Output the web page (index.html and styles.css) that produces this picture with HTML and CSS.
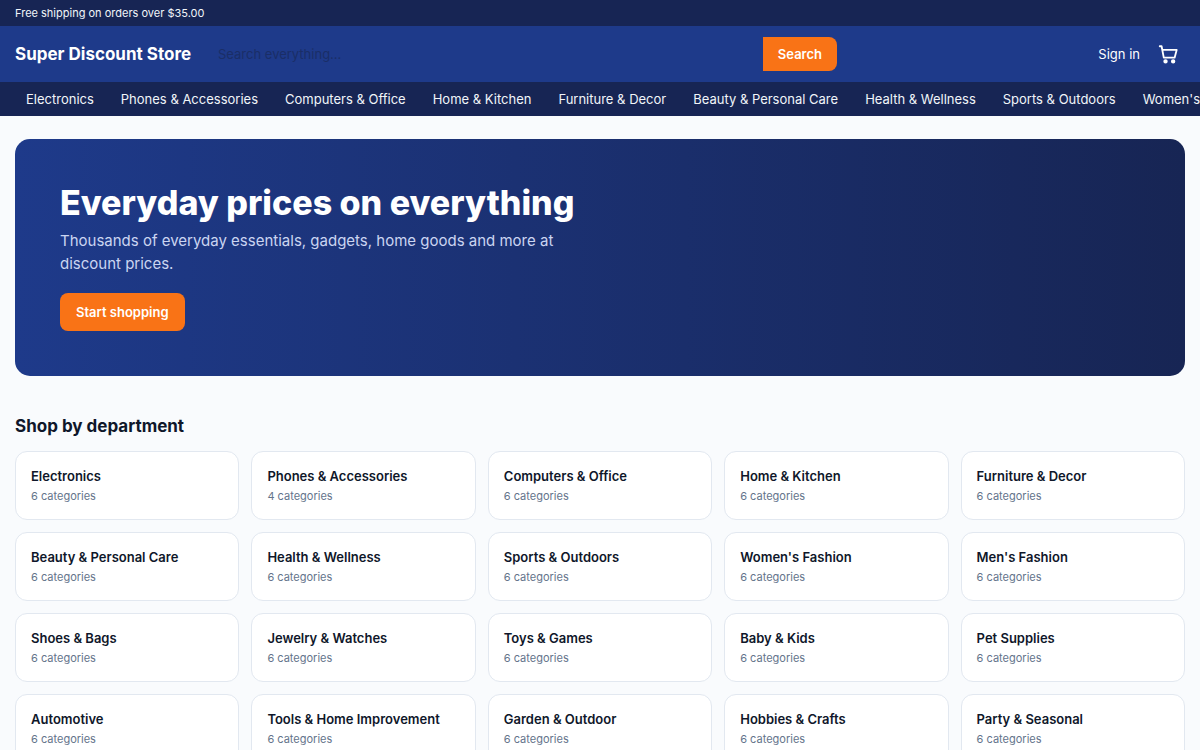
FILE: index.html
```html
<!DOCTYPE html>
<html lang="en">
<head>
<meta charset="utf-8">
<meta name="viewport" content="width=device-width, initial-scale=1">
<title>Super Discount Store</title>
<link rel="stylesheet" href="styles.css">
</head>
<body>
<div class="promo">Free shipping on orders over $35.00</div>
<header class="header">
  <a class="brand" href="#">Super Discount Store</a>
  <form class="search" role="search">
    <input class="search-input" type="search" placeholder="Search everything..." aria-label="Search everything">
    <button class="search-button" type="submit">Search</button>
  </form>
  <div class="account">
    <a class="sign-in" href="#">Sign in</a>
    <a class="cart" href="#" aria-label="Cart">
      <svg class="cart-icon" viewBox="0 0 24 24" fill="none" stroke="currentColor" stroke-width="2" stroke-linecap="round" stroke-linejoin="round" aria-hidden="true"><path d="M3 3.500h2l2.400 12.500h11.800L21.500 7.500H5.800"/><circle cx="9.300" cy="20" r="1.400" fill="currentColor"/><circle cx="17.600" cy="20" r="1.400" fill="currentColor"/></svg>
    </a>
  </div>
</header>
<nav class="departments" aria-label="Departments">
  <a href="#">Electronics</a>
  <a href="#">Phones &amp; Accessories</a>
  <a href="#">Computers &amp; Office</a>
  <a href="#">Home &amp; Kitchen</a>
  <a href="#">Furniture &amp; Decor</a>
  <a href="#">Beauty &amp; Personal Care</a>
  <a href="#">Health &amp; Wellness</a>
  <a href="#">Sports &amp; Outdoors</a>
  <a href="#">Women's Fashion</a>
</nav>
<main class="main">
  <section class="hero">
    <div class="hero-copy">
      <h1>Everyday prices on everything</h1>
      <p>Thousands of everyday essentials, gadgets, home goods and more at discount prices.</p>
      <a class="cta" href="#">Start shopping</a>
    </div>
  </section>
  <section class="shop">
    <h2>Shop by department</h2>
    <div class="grid">
      <a class="card" href="#"><strong>Electronics</strong><span>6 categories</span></a>
      <a class="card" href="#"><strong>Phones &amp; Accessories</strong><span>4 categories</span></a>
      <a class="card" href="#"><strong>Computers &amp; Office</strong><span>6 categories</span></a>
      <a class="card" href="#"><strong>Home &amp; Kitchen</strong><span>6 categories</span></a>
      <a class="card" href="#"><strong>Furniture &amp; Decor</strong><span>6 categories</span></a>
      <a class="card" href="#"><strong>Beauty &amp; Personal Care</strong><span>6 categories</span></a>
      <a class="card" href="#"><strong>Health &amp; Wellness</strong><span>6 categories</span></a>
      <a class="card" href="#"><strong>Sports &amp; Outdoors</strong><span>6 categories</span></a>
      <a class="card" href="#"><strong>Women's Fashion</strong><span>6 categories</span></a>
      <a class="card" href="#"><strong>Men's Fashion</strong><span>6 categories</span></a>
      <a class="card" href="#"><strong>Shoes &amp; Bags</strong><span>6 categories</span></a>
      <a class="card" href="#"><strong>Jewelry &amp; Watches</strong><span>6 categories</span></a>
      <a class="card" href="#"><strong>Toys &amp; Games</strong><span>6 categories</span></a>
      <a class="card" href="#"><strong>Baby &amp; Kids</strong><span>6 categories</span></a>
      <a class="card" href="#"><strong>Pet Supplies</strong><span>6 categories</span></a>
      <a class="card" href="#"><strong>Automotive</strong><span>6 categories</span></a>
      <a class="card" href="#"><strong>Tools &amp; Home Improvement</strong><span>6 categories</span></a>
      <a class="card" href="#"><strong>Garden &amp; Outdoor</strong><span>6 categories</span></a>
      <a class="card" href="#"><strong>Hobbies &amp; Crafts</strong><span>6 categories</span></a>
      <a class="card" href="#"><strong>Party &amp; Seasonal</strong><span>6 categories</span></a>
    </div>
  </section>
</main>
</body>
</html>
```
FILE: styles.css
```css
* { box-sizing: border-box; }
html { overflow-x: hidden; scrollbar-width: none; }
body {
  margin: 0;
  background: #f9fbfd;
  color: #0f172a;
  font: 13px/20px Inter, "Liberation Sans", sans-serif;
}
a { color: inherit; text-decoration: none; }
h1, h2, p { margin: 0; }

.promo {
  padding: 4px 15px;
  background: #172554;
  color: #f1f5f9;
  font-size: 11px;
  line-height: 18px;
}
.header {
  display: flex;
  align-items: center;
  gap: 15px;
  padding: 11px 15px;
  background: #1e3a8a;
  color: #fff;
}
.brand { font-size: 17px; line-height: 24px; font-weight: 700; }
.search { display: flex; flex: 1; max-width: 631px; }
.search-input {
  flex: 1;
  min-width: 0;
  height: 34px;
  padding: 0 12px;
  border: 0;
  background: transparent;
  color: #0f172a;
  font: inherit;
}
.search-input::placeholder { color: #1a2e67; opacity: 1; }
.search-button {
  height: 34px;
  padding: 0 15px;
  border: 0;
  border-radius: 0 8px 8px 0;
  background: #f97316;
  color: #fff;
  font: inherit;
  font-weight: 600;
}
.account { display: flex; align-items: center; gap: 11px; margin-left: auto; }
.cart { display: flex; padding: 6px; }
.cart-icon { width: 22px; height: 22px; }

.departments {
  display: flex;
  gap: 27px;
  padding: 7px 26px;
  overflow: hidden;
  background: #172554;
  color: #f1f5f9;
  white-space: nowrap;
}

.main { padding: 23px 15px; }
.hero {
  padding: 45px;
  border-radius: 15px;
  background: linear-gradient(to right, #1e3a8a, #172554);
  color: #fff;
}
.hero-copy { max-width: 540px; }
.hero h1 { font-size: 34px; line-height: 38px; font-weight: 800; }
.hero p { margin: 7px 0 18px; color: #cbd5f1; font-size: 15px; line-height: 23px; }
.cta {
  display: inline-block;
  padding: 9px 16px;
  border-radius: 8px;
  background: #f97316;
  color: #fff;
  font-weight: 600;
}
.shop { margin-top: 37px; }
.shop h2 { margin-bottom: 12px; font-size: 17px; line-height: 26px; font-weight: 700; }
.grid { display: grid; grid-template-columns: repeat(5, 1fr); gap: 12px; }
.card {
  display: flex;
  flex-direction: column;
  padding: 14px 15px;
  border: 1px solid #e2e8f0;
  border-radius: 12px;
  background: #fff;
}
.card strong { font-weight: 600; line-height: 21px; }
.card span { color: #64748b; font-size: 11px; line-height: 18px; }
```
